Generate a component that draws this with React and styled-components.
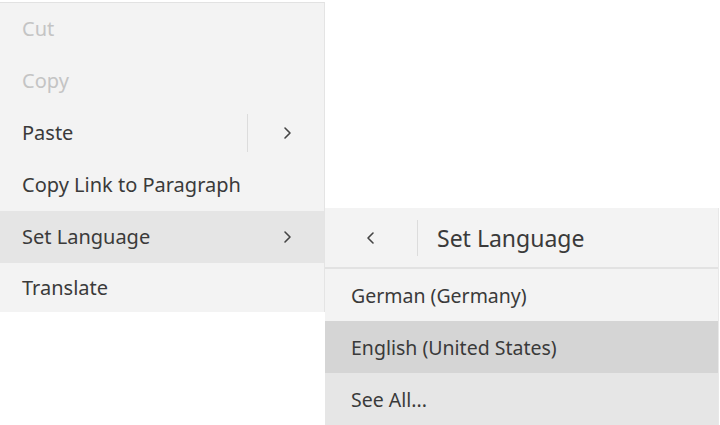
import React from "react"
import styled, {createGlobalStyle} from "styled-components"

const GlobalStyle = createGlobalStyle`
  html, body {
    margin: 0;
    padding: 0;
    background: #ffffff;
    font-family: "Noto Sans", "Open Sans", sans-serif;
  }
`

const Page = styled.div`
  width: 720px;
  height: 425px;
  overflow: hidden;
  display: flex;
  align-items: flex-start;
`

const Menu = styled.div`
  width: 324px;
  margin-top: 2px;
  background: #f3f3f3;
  border-top: 1px solid #e2e2e2;
  border-right: 1px solid #e4e4e4;
  display: flex;
  flex-direction: column;
`

const Item = styled.div`
  height: ${p => p.h || 52}px;
  display: flex;
  align-items: center;
  padding: 0 0 1px 22px;
  box-sizing: border-box;
  font-size: 20px;
  color: ${p => (p.disabled ? "#c4c4c4" : "#3a3a3a")};
  background: ${p => p.bg || "transparent"};
`

const Label = styled.span`
  flex: 1;
`

const Divider = styled.div`
  width: 1px;
  height: 38px;
  background: #dcdcdc;
  margin-right: 24px;
`

const Chevron = styled.div`
  width: 30px;
  margin-right: 22px;
  display: flex;
  justify-content: center;
  color: #444;
`

const Sub = styled.div`
  margin-top: 208px;
  width: 393px;
  height: 217px;
  background: #f3f3f3;
  border-right: 1px solid #e8e8e8;
  display: flex;
  flex-direction: column;
`

const SubHeader = styled.div`
  height: 59px;
  display: flex;
  align-items: center;
  border-bottom: 2px solid #e2e2e2;
`

const Back = styled.div`
  width: 92px;
  display: flex;
  justify-content: center;
  color: #444;
`

const HeaderDivider = styled.div`
  width: 1px;
  height: 36px;
  background: #dcdcdc;
  margin-right: 19px;
`

const Title = styled.span`
  font-size: 23px;
  color: #3a3a3a;
`

const SubItem = styled.div`
  height: 52px;
  display: flex;
  align-items: center;
  padding-left: 26px;
  font-size: 19.5px;
  color: #3a3a3a;
  background: ${p => p.bg || "transparent"};
`

const Arrow = ({left}) => (
  <svg width="12" height="14" viewBox="0 0 12 14" fill="none">
    <path
      d={left ? "M8 2 L3 7 L8 12" : "M4 2 L9 7 L4 12"}
      stroke="#444"
      strokeWidth="1.6"
      strokeLinecap="round"
      strokeLinejoin="round"
    />
  </svg>
)

const App = () => (
  <Page>
    <GlobalStyle />
    <Menu>
      <Item disabled>Cut</Item>
      <Item disabled>Copy</Item>
      <Item>
        <Label>Paste</Label>
        <Divider />
        <Chevron><Arrow /></Chevron>
      </Item>
      <Item>Copy Link to Paragraph</Item>
      <Item bg="#e5e5e5">
        <Label>Set Language</Label>
        <Chevron><Arrow /></Chevron>
      </Item>
      <Item h={49}>Translate</Item>
    </Menu>
    <Sub>
      <SubHeader>
        <Back><Arrow left /></Back>
        <HeaderDivider />
        <Title>Set Language</Title>
      </SubHeader>
      <SubItem>German (Germany)</SubItem>
      <SubItem bg="#d5d5d5">English (United States)</SubItem>
      <SubItem bg="#e6e6e6">See All...</SubItem>
    </Sub>
  </Page>
)

export default App
